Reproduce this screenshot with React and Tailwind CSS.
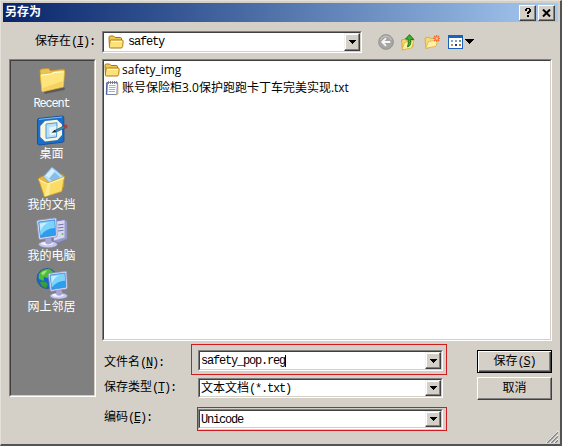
import React, { useState } from 'react';

const FONT = 'font-["Liberation_Mono","Noto_Sans_CJK_SC",monospace]';

// Half width text, six pixels per character
const Latin = ({ children }) => (
  <span className="text-[12px] tracking-[-1.2px] whitespace-pre">{children}</span>
);

const Hotkey = ({ k, colon = true }) => (
  <Latin>
    (
    <span className="underline underline-offset-1">{k}</span>
    {colon ? '):' : ')'}
  </Latin>
);

const FolderIcon = ({ className }) => (
  <svg className={className} viewBox="0 0 16 14">
    <path d="M1 2.5Q1 1 2.3 1H5.5L7 2.5H12.5Q13.5 2.5 13.5 4V12H1.5Z" fill="#f0c850" stroke="#a0761a" />
    <path d="M3.2 5H14Q15.3 5 15.2 6.3L14.6 11.5Q14.4 13 13 13H2.5Q1.2 13 1.4 11.5L2 6Q2.1 5 3.2 5Z" fill="#fde27a" stroke="#a97c1a" />
    <path d="M3 6.4H14" stroke="#fffbd6" />
  </svg>
);

const NotepadIcon = () => (
  <svg className="h-4 w-4" viewBox="0 0 16 16">
    <path d="M3 2.5H13.5L12.8 14.5H2.5Z" fill="#fff" stroke="#7a87ad" />
    <path d="M3 2.5L2.5 14.5" stroke="#5660a0" strokeWidth="1.4" />
    <path d="M5 5.5H11.5M5 7.5H11.5M4.8 9.5H11.2M4.6 11.5H11" stroke="#8d9bc0" strokeWidth="0.8" />
    <path d="M4.5 1V4M6.5 1V4M8.5 1V4M10.5 1V4M12.3 1V4" stroke="#707684" strokeWidth="0.9" />
    <path d="M13.8 4V14L11.5 15" fill="none" stroke="#c8a95b" />
  </svg>
);

const RecentIcon = () => (
  <svg className="h-8 w-8" viewBox="0 0 32 32">
    <path d="M7 27L29 23.5L28.5 26L9 30Z" fill="#5d5d5d" />
    <path d="M4 7Q4 5 6 5L12.5 4.5L14.5 7L27 5.2Q28.6 5 28.5 7L27 23L6 27.5Z" fill="#edc450" stroke="#c89a27" strokeWidth="0.8" />
    <path d="M4.3 11.5Q4.2 10 6 9.8L15 9L17 7.5L27.5 6.5Q28.8 6.4 28.6 8L27.4 22.8L6.8 27.8Q6 28 5.8 27Z" fill="#fde47d" stroke="#d7a934" strokeWidth="0.6" />
    <path d="M5.4 12.3Q5.5 11 7 10.9L15.5 10L17.5 8.6L27.4 7.7" fill="none" stroke="#fffad0" strokeWidth="1.2" />
    <path d="M7 24L26.6 17L26.2 22.2L7 27Z" fill="#f5c94e" opacity="0.65" />
  </svg>
);

const DesktopIcon = () => (
  <svg className="h-8 w-8" viewBox="0 0 32 32">
    <path d="M1.5 5Q1.5 3.5 3 3.4L26 1Q27.8 1 27.8 2.5L28 25.5Q28 27 26.5 27.2L3.5 30Q1.5 30 1.5 28Z" fill="#1c6fc8" stroke="#0b4a94" strokeWidth="0.8" />
    <path d="M3 5Q3 4.4 4 4.3L26 2" stroke="#7cc0f5" fill="none" />
    <path d="M9 6L21 4.7L26 9.5V20L21.5 25L9 26.5L4.3 22V11Z" fill="#f8f6dc" />
    <path d="M10 9L21 7.7L20.5 22L10 23.3Z" fill="#b9e0f8" stroke="#4b9bd5" />
    <path d="M13 12.5L20.4 11L20 19.5L14 20.5Z" fill="#e6f6ff" />
    <path d="M18 15.8L28 10.8L29.3 13L20 17Z" fill="#4289bb" stroke="#1b4f78" strokeWidth="0.6" />
    <path d="M15.5 17.8L18.7 14.8L20.2 17.2Z" fill="#252525" />
    <circle cx="29.4" cy="11.6" r="2.1" fill="#b8393d" />
  </svg>
);

const DocumentsIcon = () => (
  <svg className="h-8 w-8" viewBox="0 0 32 32">
    <path d="M2.5 12L9 9L14 13L27 8L28 21L8 30Z" fill="#e8b63c" stroke="#b98b20" strokeWidth="0.8" />
    <path d="M7.5 10.5L16 1L28 11L19 23Z" fill="#b7def8" stroke="#6ea9d8" strokeWidth="0.8" />
    <path d="M11 10.5L16.3 4L24 11L18.5 17Z" fill="#86bfec" />
    <path d="M10 9.5L16 3L19 5.5L13 12.5Z" fill="#e8f7ff" opacity="0.8" />
    <path d="M2.5 13L11.5 17L15.5 15.5L28.5 10.5L25.8 25.5L8.5 31Z" fill="#fbdc67" stroke="#cf9c2a" strokeWidth="0.8" />
    <path d="M2.8 13.6L11.5 18L16 16.4L28 11.8" fill="none" stroke="#fff6bd" strokeWidth="1.1" />
    <path d="M8.5 30.4L11.5 18.5L14.5 17.3L13 29Z" fill="#fff0a0" opacity="0.8" />
  </svg>
);

const Monitor = () => (
  <g>
    <ellipse cx="12" cy="27.4" rx="9.4" ry="3.4" fill="#c6c8ec" stroke="#8184b5" strokeWidth="0.6" />
    <ellipse cx="11" cy="26.6" rx="6" ry="1.6" fill="#f4f4ff" />
    <path d="M9 21L15 20L16 26Q12.5 28.5 9.5 26.5Z" fill="#a4a5d4" />
    <path d="M0.8 4.8Q0.6 3.4 2.1 3.2L19 1Q20.4 0.9 20.5 2.3L21.2 18.3Q21.3 19.8 20 20L4.5 22.4Q3 22.6 2.8 21.2Z" fill="#e1e2f8" stroke="#8d90c5" strokeWidth="0.8" />
    <path d="M2.6 5L18.8 2.8L19.6 18.2L4.5 20.6Z" fill="#2d9ded" stroke="#3675bd" strokeWidth="0.6" />
    <path d="M3.1 5.4L18.3 3.4L18.9 11Q10 11 4.6 18.5Z" fill="#7ed3fb" />
    <path d="M3.8 6.4L13 5.2Q6.5 8 4.5 14Z" fill="#c4effe" />
  </g>
);

const ComputerIcon = () => (
  <svg className="h-8 w-8" viewBox="0 0 32 32">
    <path d="M17 4.5L28.5 2.5L31.5 4.5V22L22 26L17 24Z" fill="#9698ca" stroke="#7779ad" strokeWidth="0.7" />
    <path d="M17.5 5L28.5 3.3V20.5L18 23.5Z" fill="#d7d8f2" />
    <path d="M22 8L27.5 7.2M22 11L27.5 10.2M22 14L27.5 13.2" stroke="#7476aa" strokeWidth="1.1" />
    <circle cx="26.5" cy="17" r="1" fill="#66b84a" />
    <Monitor />
  </svg>
);

const NetworkIcon = () => (
  <svg className="h-8 w-8" viewBox="0 0 32 32">
    <circle cx="11" cy="10.5" r="10" fill="#1767c7" stroke="#124a91" strokeWidth="0.6" />
    <path d="M4.5 4Q8 0.4 14 1.2L17 4L14 6L12 10L8 9L7.5 13L3 11Q1.8 7 4.5 4Z" fill="#4fbd3a" />
    <path d="M4 14L9 13.5L12 16L10 20Q5 19 4 14Z" fill="#369f2f" />
    <path d="M5 5Q8 2 11.5 2.5L7 7.5Z" fill="#b8ed83" opacity="0.8" />
    <path d="M15.5 2L20 6.5L17 7Z" fill="#45a83b" />
    <g transform="translate(11.6 2.4) scale(0.93)">
      <Monitor />
    </g>
  </svg>
);

const places = [
  { label: <Latin>Recent</Latin>, icon: RecentIcon },
  { label: '桌面', icon: DesktopIcon },
  { label: '我的文档', icon: DocumentsIcon },
  { label: '我的电脑', icon: ComputerIcon },
  { label: '网上邻居', icon: NetworkIcon },
];

const DropButton = () => (
  <button className="flex w-4 shrink-0 items-center justify-center border border-t-[#f2f0ec] border-l-[#f2f0ec] border-r-[#404040] border-b-[#404040] bg-[#d4d0c8] shadow-[inset_-1px_-1px_0_#808080,inset_1px_1px_0_#fff]">
    <svg className="h-1 w-[7px]" viewBox="0 0 7 4" shapeRendering="crispEdges">
      <path d="M0 0H7L3.5 4Z" fill="#000" />
    </svg>
  </button>
);

const sunken = 'border border-t-[#808080] border-l-[#808080] border-r-white border-b-white';
const inner = 'border border-t-[#404040] border-l-[#404040] border-r-[#d4d0c8] border-b-[#d4d0c8]';

const Combo = ({ className, children }) => (
  <div className={`${sunken} ${className}`}>
    <div className={`${inner} flex h-full bg-white`}>
      <div className="flex flex-1 items-center pt-px pl-px">{children}</div>
      <DropButton />
    </div>
  </div>
);

const CaptionButton = ({ label, children }) => (
  <button
    aria-label={label}
    className="flex h-4 w-[17px] items-center justify-center border border-t-white border-l-white border-r-[#404040] border-b-[#404040] bg-[#d4d0c8] shadow-[inset_-1px_-1px_0_#808080]"
  >
    {children}
  </button>
);

const Toolbar = () => (
  <div className="mt-px flex items-center">
    <svg className="h-4 w-4" viewBox="0 0 16 16">
      <circle cx="8" cy="8" r="7.4" fill="#a5a5a3" stroke="#8d8d8b" strokeWidth="0.8" />
      <path d="M2.5 6Q4 2 8 2T13.5 6" fill="none" stroke="#c8c8c6" />
      <path d="M12.3 8H4.5M8 4.2L4.2 8L8 11.8" fill="none" stroke="#f6f6f4" strokeWidth="1.8" />
    </svg>
    <svg className="ml-[6px] h-[17px] w-4" viewBox="0 0 16 17">
      <path d="M1.5 6L5 5L6 6.2L13 4V12.5L2.5 16Z" fill="#f3d66d" stroke="#caa035" strokeWidth="0.8" />
      <path d="M2.2 15.8L4.5 8.5L14 6.5L11.5 14Z" fill="#fff19a" stroke="#d5ad40" strokeWidth="0.7" />
      <path d="M6.5 13Q11 11.5 9.5 5.5H12.8L8.5 0.6L4.5 5H7Q8 9 6.5 13Z" transform="translate(1 0)" fill="#3cae32" stroke="#15781c" strokeWidth="0.9" />
    </svg>
    <svg className="ml-[8px] h-4 w-4" viewBox="0 0 16 16">
      <path d="M1 4L5 3L6.5 4.5L12.5 3.5V11L2 14.5Z" fill="#f6d978" stroke="#cda445" strokeWidth="0.8" />
      <path d="M1.7 14.3L4.5 7.5L14 6L11.8 12.3Z" fill="#fff1a3" stroke="#d8ae4a" strokeWidth="0.7" />
      <path d="M12.7 1V8M9.2 4.5H16M10.2 2L15.2 7M15.2 2L10.2 7" stroke="#f1642c" strokeWidth="1.1" />
      <circle cx="12.7" cy="4.5" r="1.3" fill="#ffd083" />
    </svg>
    <svg className="ml-[8px] h-4 w-[27px]" viewBox="0 0 27 16" shapeRendering="crispEdges">
      <path d="M0 1H15V15H0Z" fill="#1c62bd" />
      <path d="M1 4H14V14H1Z" fill="#fff" />
      <path d="M3 6H5V8H3Z" fill="#8f9cc6" />
      <path d="M7 6H9V8H7Z" fill="#7da0c4" />
      <path d="M11 6H13V8H11Z" fill="#5f9f66" />
      <path d="M3 10H5V12H3Z" fill="#c58b58" />
      <path d="M7 10H9V12H7Z" fill="#233b76" />
      <path d="M11 10H13V12H11Z" fill="#b6724e" />
      <path d="M17 5H26L21.5 10Z" fill="#000" />
    </svg>
  </div>
);

export default function App() {
  const [fileName] = useState('safety_pop.reg');

  return (
    <div className={`${FONT} flex h-[446px] w-[562px] flex-col overflow-hidden border-t border-l border-r-2 border-b-2 border-t-[#e4e1da] border-l-[#e4e1da] border-r-[#55534f] border-b-[#55534f] bg-[#d4d0c8] text-[12px] leading-4 text-black`}>
      {/* Title bar */}
      <div className="mx-[2px] mt-[2px] flex h-[19px] shrink-0 items-center bg-linear-to-r from-[#0a246a] to-[#a6caf0] pr-[3px] pl-[2px]">
        <span className="flex-1 pt-px font-bold text-white">另存为</span>
        <div className="flex gap-[2px]">
          <CaptionButton label="Help">
            <svg className="h-[9px] w-2" viewBox="0 0 8 9" shapeRendering="crispEdges">
              <path d="M1 1H2V0H6V1H7V4H6V5H5V6H3V4H4V3H5V1H3V3H1ZM3 7H5V9H3Z" fill="#000" />
            </svg>
          </CaptionButton>
          <CaptionButton label="Close">
            <svg className="h-2 w-[9px]" viewBox="0 0 9 8">
              <path d="M1 0.5L8 7.5M8 0.5L1 7.5" stroke="#000" strokeWidth="2" />
            </svg>
          </CaptionButton>
        </div>
      </div>

      {/* Look in */}
      <div className="mt-[9px] flex h-[21px] shrink-0 items-center">
        <div className="w-[101px] pl-[34px] whitespace-nowrap">
          保存在<Hotkey k="I" />
        </div>
        <Combo className="h-[22px] w-[260px]">
          <FolderIcon className="ml-[3px] h-[14px] w-4" />
          <span className="ml-1"><Latin>safety</Latin></span>
        </Combo>
        <div className="ml-[16px]">
          <Toolbar />
        </div>
      </div>

      <div className="mt-[7px] flex shrink-0 pl-2">
        {/* Places bar */}
        <div className={`h-[338px] w-[87px] ${sunken}`}>
          <div className={`${inner} flex h-full flex-col bg-[#808080] pt-[3px] pr-[2px]`}>
            {places.map((p, i) => (
              <div key={i} className="flex h-[51px] shrink-0 flex-col items-center text-white">
                <p.icon />
                <span>{p.label}</span>
              </div>
            ))}
          </div>
        </div>

        <div className="ml-[6px] flex flex-col">
          {/* File list */}
          <div className={`h-[282px] w-[450px] ${sunken}`}>
            <div className={`${inner} h-full bg-white font-["Open_Sans","Noto_Sans_CJK_SC",sans-serif]`}>
              <div className="flex h-[18px] items-center">
                <FolderIcon className="h-[14px] w-4" />
                <span className="ml-[2px]">safety_img</span>
              </div>
              <div className="flex h-[18px] items-center">
                <NotepadIcon />
                <span className="ml-[2px]">账号保险柜3.0保护跑跑卡丁车完美实现.txt</span>
              </div>
            </div>
          </div>

          {/* Form */}
          <div className="mt-[3px] flex">
            <div className="w-[89px] pl-[2px] whitespace-nowrap">
              <div className="mt-[11px] h-[25px]">文件名<Hotkey k="N" /></div>
              <div className="h-[30px]">保存类型<Hotkey k="T" /></div>
              <div>编码<Hotkey k="E" /></div>
            </div>
            <div className="w-[256px]">
              <div className="h-[31px] border border-[#d01c20] pt-[5px] pl-[6px]">
                <Combo className="h-[21px] w-[245px]">
                  <Latin>{fileName}</Latin>
                  <span className="h-3 w-px bg-black" />
                </Combo>
              </div>
              <div className="mt-[3px] pl-[7px]">
                <Combo className="h-5 w-[245px]">
                  文本文档<Latin>(*.txt)</Latin>
                </Combo>
              </div>
              <div className="mt-[9px] ml-[6px] h-6 border border-[#d01c20] pt-px">
                <Combo className="h-5 w-[245px]">
                  <Latin>Unicode</Latin>
                </Combo>
              </div>
            </div>
            <div className="ml-[30px] flex w-[75px] flex-col gap-1 pt-[6px]">
              <button className="h-[23px] border border-black bg-[#d4d0c8] shadow-[inset_1px_1px_0_#fff,inset_-1px_-1px_0_#404040,inset_-2px_-2px_0_#808080]">
                保存<Hotkey k="S" colon={false} />
              </button>
              <button className="h-[23px] border border-t-white border-l-white border-r-[#404040] border-b-[#404040] bg-[#d4d0c8] shadow-[inset_-1px_-1px_0_#808080]">
                取消
              </button>
            </div>
          </div>
        </div>
      </div>

      {/* Resize grip */}
      <div className="mt-auto mr-[2px] mb-px flex justify-end">
        <svg className="h-3 w-3" viewBox="0 0 12 12">
          <path d="M0 12L12 0M4 12L12 4M8 12L12 8" stroke="#fff" />
          <path d="M1.2 12L12 1.2M5.2 12L12 5.2M9.2 12L12 9.2" stroke="#808080" strokeWidth="1.3" />
        </svg>
      </div>
    </div>
  );
}
